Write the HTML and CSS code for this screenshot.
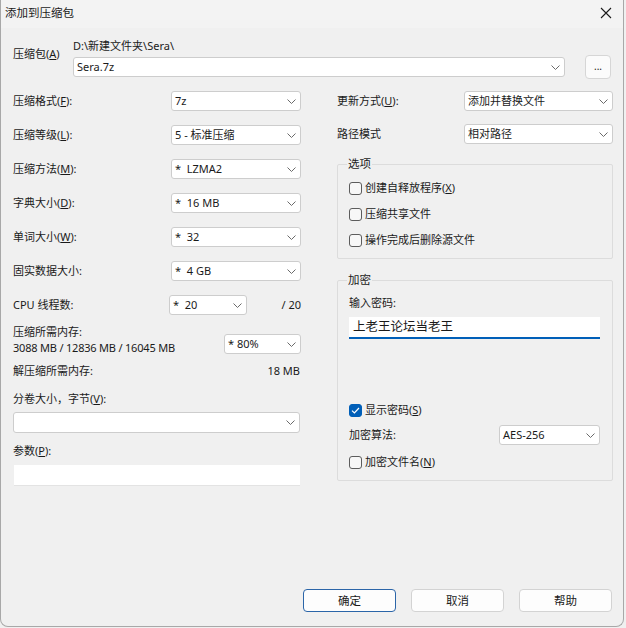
FILE: index.html
```html
<!DOCTYPE html>
<html lang="zh-CN">
<head>
<meta charset="utf-8">
<title>添加到压缩包</title>
<link rel="stylesheet" href="styles.css">
</head>
<body>
<div class="window">
  <div class="titlebar">
    <span class="title">添加到压缩包</span>
    <svg class="close" width="12" height="12" viewBox="0 0 12 12"><path d="M1 1 L11 11 M11 1 L1 11" stroke="#1a1a1a" stroke-width="1.1" fill="none"/></svg>
  </div>
  <div class="content">
    <div class="archive">
      <div class="arch-label">压缩包(<u>A</u>)</div>
      <div class="arch-main">
        <div class="path">D:\新建文件夹\Sera\</div>
        <div class="arch-row">
          <div class="combo arch-combo"><span>Sera.7z</span><svg class="chev" width="9" height="5" viewBox="0 0 9 5"><path d="M0.5 0.5 L4.5 4.5 L8.5 0.5" stroke="#6a6a6a" stroke-width="1" fill="none"/></svg></div>
          <div class="dots">...</div>
        </div>
      </div>
    </div>

    <div class="main">
      <div class="left">
        <div class="field"><span>压缩格式(<u>F</u>):</span><div class="combo c130"><span>7z</span><svg class="chev" width="9" height="5" viewBox="0 0 9 5"><path d="M0.5 0.5 L4.5 4.5 L8.5 0.5" stroke="#6a6a6a" stroke-width="1" fill="none"/></svg></div></div>
        <div class="field"><span>压缩等级(<u>L</u>):</span><div class="combo c130"><span>5 - 标准压缩</span><svg class="chev" width="9" height="5" viewBox="0 0 9 5"><path d="M0.5 0.5 L4.5 4.5 L8.5 0.5" stroke="#6a6a6a" stroke-width="1" fill="none"/></svg></div></div>
        <div class="field"><span>压缩方法(<u>M</u>):</span><div class="combo c130"><span class="pre">*  LZMA2</span><svg class="chev" width="9" height="5" viewBox="0 0 9 5"><path d="M0.5 0.5 L4.5 4.5 L8.5 0.5" stroke="#6a6a6a" stroke-width="1" fill="none"/></svg></div></div>
        <div class="field"><span>字典大小(<u>D</u>):</span><div class="combo c130"><span class="pre">*  16 MB</span><svg class="chev" width="9" height="5" viewBox="0 0 9 5"><path d="M0.5 0.5 L4.5 4.5 L8.5 0.5" stroke="#6a6a6a" stroke-width="1" fill="none"/></svg></div></div>
        <div class="field"><span>单词大小(<u>W</u>):</span><div class="combo c130"><span class="pre">*  32</span><svg class="chev" width="9" height="5" viewBox="0 0 9 5"><path d="M0.5 0.5 L4.5 4.5 L8.5 0.5" stroke="#6a6a6a" stroke-width="1" fill="none"/></svg></div></div>
        <div class="field"><span>固实数据大小:</span><div class="combo c130"><span class="pre">*  4 GB</span><svg class="chev" width="9" height="5" viewBox="0 0 9 5"><path d="M0.5 0.5 L4.5 4.5 L8.5 0.5" stroke="#6a6a6a" stroke-width="1" fill="none"/></svg></div></div>
        <div class="field cpu"><span class="grow">CPU 线程数:</span><div class="combo c78"><span class="pre">*  20</span><svg class="chev" width="9" height="5" viewBox="0 0 9 5"><path d="M0.5 0.5 L4.5 4.5 L8.5 0.5" stroke="#6a6a6a" stroke-width="1" fill="none"/></svg></div><span class="threads">/ 20</span></div>
        <div class="mem">
          <div class="mem-text">
            <div>压缩所需内存:</div>
            <div class="tight">3088 MB / 12836 MB / 16045 MB</div>
          </div>
          <div class="combo c77"><span class="pre">* 80%</span><svg class="chev" width="9" height="5" viewBox="0 0 9 5"><path d="M0.5 0.5 L4.5 4.5 L8.5 0.5" stroke="#6a6a6a" stroke-width="1" fill="none"/></svg></div>
        </div>
        <div class="decomp"><span>解压缩所需内存:</span><span>18 MB</span></div>
        <div class="vol-label">分卷大小，字节(<u>V</u>):</div>
        <div class="combo full vol"><span></span><svg class="chev" width="9" height="5" viewBox="0 0 9 5"><path d="M0.5 0.5 L4.5 4.5 L8.5 0.5" stroke="#6a6a6a" stroke-width="1" fill="none"/></svg></div>
        <div class="param-label">参数(<u>P</u>):</div>
        <div class="textbox"></div>
      </div>

      <div class="right">
        <div class="field"><span>更新方式(<u>U</u>):</span><div class="combo c149"><span>添加并替换文件</span><svg class="chev" width="9" height="5" viewBox="0 0 9 5"><path d="M0.5 0.5 L4.5 4.5 L8.5 0.5" stroke="#6a6a6a" stroke-width="1" fill="none"/></svg></div></div>
        <div class="field path-mode"><span>路径模式</span><div class="combo c149"><span>相对路径</span><svg class="chev" width="9" height="5" viewBox="0 0 9 5"><path d="M0.5 0.5 L4.5 4.5 L8.5 0.5" stroke="#6a6a6a" stroke-width="1" fill="none"/></svg></div></div>

        <fieldset class="group options">
          <legend>选项</legend>
          <div class="check"><span class="box"></span><span>创建自释放程序(<u>X</u>)</span></div>
          <div class="check"><span class="box"></span><span>压缩共享文件</span></div>
          <div class="check"><span class="box"></span><span>操作完成后删除源文件</span></div>
        </fieldset>

        <fieldset class="group encrypt">
          <legend>加密</legend>
          <div class="pw-label">输入密码:</div>
          <div class="pw">上老王论坛当老王</div>
          <div class="check show"><span class="box checked"><svg width="9" height="7" viewBox="0 0 9 7"><path d="M1 3.6 L3.4 6 L8 1" stroke="#fff" stroke-width="1.2" fill="none"/></svg></span><span>显示密码(<u>S</u>)</span></div>
          <div class="algo"><span>加密算法:</span><div class="combo c101"><span>AES-256</span><svg class="chev" width="9" height="5" viewBox="0 0 9 5"><path d="M0.5 0.5 L4.5 4.5 L8.5 0.5" stroke="#6a6a6a" stroke-width="1" fill="none"/></svg></div></div>
          <div class="check encname"><span class="box"></span><span>加密文件名(<u>N</u>)</span></div>
        </fieldset>
      </div>
    </div>

    <div class="buttons">
      <div class="btn default">确定</div>
      <div class="btn">取消</div>
      <div class="btn">帮助</div>
    </div>
  </div>
</div>
</body>
</html>
```

FILE: styles.css
```css
* { box-sizing: border-box; }
html, body {
  margin: 0;
  padding: 0;
  background: #f0f0f0;
}
body {
  font-family: "Noto Sans", "Noto Sans CJK SC", sans-serif;
  font-size: 11px;
  color: #1a1a1a;
  line-height: 16px;
}
u { text-decoration: underline; text-underline-offset: 1px; }
.pre { white-space: pre; }
.tight { letter-spacing: -0.2px; }

.window {
  width: 624px;
  height: 627px;
  background: #f0f0f0;
  border: 1px solid #a8a8a8;
  border-top: none;
  border-radius: 0 0 8px 8px;
  display: flex;
  flex-direction: column;
}
.titlebar {
  height: 28px;
  flex: none;
  display: flex;
  align-items: center;
  justify-content: space-between;
  padding: 0 11px 2px 4px;
  background: #f3f3f3;
}
.title { font-size: 11.5px; }
.close { display: block; }

.content {
  flex: 1;
  display: flex;
  flex-direction: column;
  padding: 0 10px 14px 12px;
}

/* archive row */
.archive { display: flex; padding-top: 10px; }
.arch-label { width: 60px; padding-top: 8px; }
.arch-main { flex: 1; }
.path { height: 16px; }
.arch-row { display: flex; align-items: center; margin-top: 1px; }
.arch-combo { width: 492px; height: 22px; }
.dots {
  width: 26px;
  height: 24px;
  margin-left: 20px;
  background: #fbfbfb;
  border: 1px solid #d6d6d6;
  border-radius: 4px;
  display: flex;
  align-items: center;
  justify-content: center;
  padding-bottom: 2px;
  font-size: 10px;
}

/* combos */
.combo {
  height: 20px;
  background: #ffffff;
  border: 1px solid #cdcdcd;
  border-radius: 3px;
  display: flex;
  align-items: center;
  justify-content: space-between;
  padding: 0 4px 0 3px;
}
.chev { display: block; flex: none; }
.c130 { width: 130px; }
.c78 { width: 78px; }
.c77 { width: 77px; }
.c149 { width: 149px; }
.c101 { width: 101px; }
.full { width: 287px; }

.main {
  display: grid;
  grid-template-columns: 288px 276px;
  column-gap: 36px;
  margin-top: 12px;
}
.left, .right { display: flex; flex-direction: column; }

.field {
  display: flex;
  align-items: center;
  justify-content: space-between;
  height: 20px;
  margin-bottom: 14px;
}
.field.cpu { margin-bottom: 0; }
.grow { flex: 1; }
.threads { width: 54px; text-align: right; }

.mem {
  display: flex;
  justify-content: space-between;
  margin-top: 9px;
}
.mem-text div { height: 16px; }
.mem .combo { margin-top: 10px; }
.decomp {
  display: flex;
  justify-content: space-between;
  margin-top: 7px;
  padding-right: 1px;
}
.vol-label { margin-top: 12px; }
.vol { margin-top: 5px; height: 21px; }
.param-label { margin-top: 10px; }
.textbox {
  margin-top: 6px;
  width: 286px;
  margin-left: 1px;
  height: 21px;
  background: #ffffff;
  border-bottom: 1px solid #e3e3e3;
}

/* right */
.right .field { margin-bottom: 0; }
.path-mode { margin-top: 13px; }

.group {
  margin: 0;
  border: 1px solid #dcdcdc;
  border-radius: 2px;
  padding: 0 12px 10px 11px;
  min-width: 0;
}
.group legend {
  padding: 0 1px;
  margin-left: -2px;
  line-height: 16px;
  font-size: 11.5px;
}
.options { margin-top: 12px; }
.options .check:first-of-type { margin-top: 8px; }
.check {
  display: flex;
  align-items: center;
  height: 16px;
  gap: 3px;
}
.options .check + .check { margin-top: 10px; }
.box {
  width: 13px;
  height: 13px;
  border: 1px solid #5c5c5c;
  border-radius: 3px;
  background: #f7f7f7;
  display: flex;
  align-items: center;
  justify-content: center;
  flex: none;
}
.box.checked {
  background: #005fb8;
  border-color: #005fb8;
}
.box.checked svg { display: block; }

.encrypt { margin-top: 13px; padding-bottom: 10px; }
.pw-label { margin-top: 7px; }
.pw {
  margin-top: 6px;
  height: 22px;
  background: #ffffff;
  border-bottom: 2px solid #005fb8;
  font-size: 12.5px;
  line-height: 20px;
  padding-left: 4px;
}
.show { margin-top: 63px; }
.algo {
  display: flex;
  align-items: center;
  justify-content: space-between;
  height: 20px;
  margin-top: 7px;
}
.encname { margin-top: 9px; }

.buttons {
  margin-top: auto;
  display: flex;
  justify-content: flex-end;
  gap: 15px;
  padding-right: 1px;
}
.btn {
  width: 93px;
  height: 23px;
  background: #fdfdfd;
  border: 1px solid #d3d3d3;
  border-radius: 4px;
  display: flex;
  align-items: center;
  justify-content: center;
  font-size: 11.5px;
}
.btn.default { border-color: #2b65a8; }
```
